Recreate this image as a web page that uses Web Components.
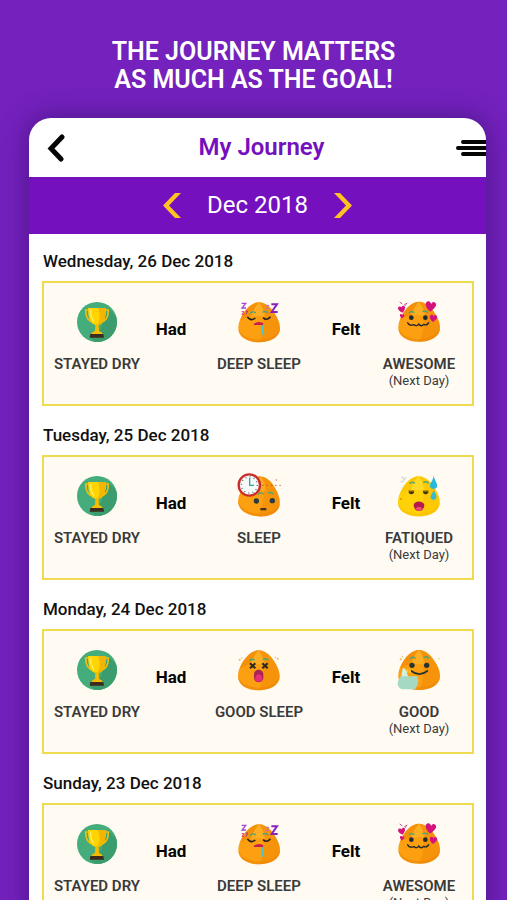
<!DOCTYPE html>
<html lang="en">
<head>
<meta charset="utf-8">
<meta name="viewport" content="width=device-width, initial-scale=1">
<title>My Journey</title>
<style>
html { height: 100%; }
body { margin: 0; height: 100%; overflow: hidden; background: #7421bd; font-family: Roboto, "Liberation Sans", sans-serif; }
</style>
</head>
<body>
<journey-page>
  <span slot="slogan">THE JOURNEY MATTERS<br>AS MUCH AS THE GOAL!</span>
  <app-header slot="header">My Journey</app-header>
  <month-bar slot="header">Dec 2018</month-bar>
  <day-entry day="Wednesday, 26 Dec 2018">
    <mood-item icon="trophy">STAYED DRY</mood-item><span slot="had">Had</span>
    <mood-item slot="sleep" icon="deep">DEEP SLEEP</mood-item><span slot="felt">Felt</span>
    <mood-item slot="mood" icon="love" note="(Next Day)">AWESOME</mood-item>
  </day-entry>
  <day-entry day="Tuesday, 25 Dec 2018">
    <mood-item icon="trophy">STAYED DRY</mood-item><span slot="had">Had</span>
    <mood-item slot="sleep" icon="clock">SLEEP</mood-item><span slot="felt">Felt</span>
    <mood-item slot="mood" icon="sweat" note="(Next Day)">FATIQUED</mood-item>
  </day-entry>
  <day-entry day="Monday, 24 Dec 2018">
    <mood-item icon="trophy">STAYED DRY</mood-item><span slot="had">Had</span>
    <mood-item slot="sleep" icon="out">GOOD SLEEP</mood-item><span slot="felt">Felt</span>
    <mood-item slot="mood" icon="thumb" note="(Next Day)">GOOD</mood-item>
  </day-entry>
  <day-entry day="Sunday, 23 Dec 2018">
    <mood-item icon="trophy">STAYED DRY</mood-item><span slot="had">Had</span>
    <mood-item slot="sleep" icon="deep">DEEP SLEEP</mood-item><span slot="felt">Felt</span>
    <mood-item slot="mood" icon="love" note="(Next Day)">AWESOME</mood-item>
  </day-entry>
</journey-page>
<script>
const shadow = (el, html) => { el.attachShadow({ mode: "open" }).innerHTML = html; };

/* Faces share one egg-shaped body; each drawing has its own view box. */
const BODY = "M62 0C84 0 102 20 114 42C122 56 125 68 125 78C125 106 94 120 62 120S0 106 0 78C0 68 2 56 10 42C22 20 40 0 62 0Z";
const egg = (x, y, fill = "#fc9f10", shade = "#ec8104", light = "#ffb52c") => `
  <g transform="translate(${x} ${y})">
    <path d="${BODY}" fill="${fill}"/>
    <path d="M62 0C84 0 102 20 114 42C122 56 125 68 125 78C125 106 94 120 62 120C80 92 80 32 62 0Z" fill="${shade}" opacity=".4"/>
    <path d="M10 42C22 20 40 0 62 0C54 8 44 24 38 42Q22 44 6 54Z" fill="${shade}" opacity=".5"/>
    <path d="M38 44C44 26 54 8 62 0C72 12 78 28 80 44Q58 38 38 44Z" fill="${light}" opacity=".7"/>
    <path d="M0 78C6 100 34 112 62 112S118 100 125 78C125 106 94 120 62 120S0 106 0 78Z" fill="${shade}" opacity=".45"/>
  </g>`;
const brows = (a, b, y) => `<path d="M${a - 7} ${y + 2}q6-6 14-1M${b - 7} ${y - 1}q8-4 14 2" fill="none" stroke="#45a878" stroke-width="4" stroke-linecap="round"/>`;
const heart = (x, y, s, r = 0) => `<path transform="translate(${x} ${y}) rotate(${r}) scale(${s})" d="M0 9C-16-2-10-12-4-10Q-1-9 0-6Q2-12 7-10C14-6 7 3 0 9Z" fill="#d3127c"/>`;

const ICONS = {
  trophy: ["37 30 144 132", `
    <defs><clipPath id="c"><circle cx="109" cy="99" r="60"/></clipPath></defs>
    <circle cx="109" cy="99" r="60" fill="#45ac7b"/>
    <path clip-path="url(#c)" d="M143 58L190 106V180H126L88 146L120 120Z" fill="#3b9d6e"/>
    <path d="M84 63H75C75 82 82 97 98 99M134 63H143C143 82 136 97 120 99" fill="none" stroke="#f3bd08" stroke-width="5"/>
    <path d="M82 57H136C136 85 130 108 109 108S82 85 82 57Z" fill="#ffd400"/>
    <path d="M112 57H136C136 85 130 108 110 108C120 94 118 75 112 57Z" fill="#f2b600"/>
    <path d="M90 62C90 78 93 90 100 98" fill="none" stroke="#ffed70" stroke-width="4"/>
    <path d="M104 106h10l1 19 10 7v5H93v-5l10-7Z" fill="#f5bc00"/>
    <path d="M89 135h39l2 11H87Z" fill="#3d2b20"/>`],
  deep: ["43 30 144 132", egg(53, 40) + brows(97, 134, 70) + `
    <path d="M80 84Q92 98 104 87M127 86Q139 97 149 83" fill="none" stroke="#26231f" stroke-width="5"/>
    <path d="M99 105Q110 94 128 102L127 108H100Z" fill="#c71f4c"/>
    <path d="M121 108h9v26q-3 7-7 1Z" fill="#49c7cc"/>
    <g fill="none" stroke-linejoin="miter"><path d="M63 43h12L64 57h12" stroke="#a347d9" stroke-width="4"/><path d="M63 68h7l-6 8h7" stroke="#d84372" stroke-width="3"/><path d="M75 66h6l-5 10" stroke="#a3358c" stroke-width="3"/><path d="M152 46h17L153 69h18" stroke="#8c20ba" stroke-width="6"/><path d="M136 49h9l-8 10h9" stroke="#c36bbd" stroke-width="3"/></g>`],
  love: ["53 30 144 132", egg(63, 38) + brows(103, 144, 69) + `
    <circle cx="102" cy="86" r="7" fill="#242a28"/><circle cx="144" cy="86" r="7" fill="#242a28"/>
    <path d="M91 101Q96 112 111 107Q119 114 124 105Q132 115 139 106Q149 111 154 101" fill="none" stroke="#242a28" stroke-width="4" stroke-linecap="round"/>
    ${heart(160, 54, 1.55, 8)}${heart(168, 89, 1.1, 8)}${heart(74, 62, 1.05, -12)}${heart(74, 82, .65, 8)}
    <path d="M67 39l8 6m6 2 9-5M82 50l5-3" stroke="#cc4c88" stroke-width="3"/>`],
  clock: ["45 22 144 132", `<g transform="rotate(5 118 90)">${egg(56, 32)}</g>` + brows(122, 152, 83) + `
    <circle cx="109" cy="106" r="8" fill="#263e42"/><circle cx="157" cy="105" r="8" fill="#263e42"/>
    <rect x="121" y="127" width="18" height="7" fill="#4b321c"/>
    <path d="M126 59H184" stroke="#b74a0f" stroke-width="2" stroke-dasharray="5 8"/><circle cx="169" cy="43" r="2" fill="#ce6637"/>
    <circle cx="88" cy="58" r="32" fill="#f5faf8" stroke="#c92c2c" stroke-width="7"/>
    <circle cx="88" cy="58" r="24" fill="none" stroke="#527277" stroke-width="4" stroke-dasharray="3 9.56"/>
    <path d="M89 37V59H102" fill="none" stroke="#31a79b" stroke-width="4"/>`],
  sweat: ["48 24 144 132", egg(57, 34, "#ffd109", "#f9bd00", "#ffe034") + brows(100, 141, 53) + `
    <path d="M89 79h16v4q-8 9-16 0ZM132 79h16v4q-8 9-16 0Z" fill="#423517"/>
    <path d="M88 77h18M131 77h18" stroke="#bd8707" stroke-width="3"/>
    <path d="M104 121C105 106 134 106 136 121Q134 138 120 138T104 121Z" fill="#b4194a"/><path d="M109 131Q120 120 131 131Q120 143 109 131Z" fill="#f04a7f"/>
    <path d="M164 31C166 47 177 55 174 65C170 74 157 74 153 65C151 56 163 47 164 31Z" fill="#27b8dc"/>
    <path d="M164 72C166 84 174 89 172 98C169 106 158 106 155 98C154 90 163 84 164 72Z" fill="#38b8d1"/>
    <path d="M67 40q8-8 7 2t8-6M65 50q7-5 7 4" fill="none" stroke="#d5dddd" stroke-width="4"/><circle cx="66" cy="102" r="3" fill="#dd9a00"/>`],
  out: ["51 18 144 132", egg(60, 28) + brows(102, 143, 56) + `
    <path d="M96 67l16 15m0-15L96 82M133 67l16 15m0-15-16 15" stroke="#292a25" stroke-width="6"/>
    <rect x="108" y="86" width="28" height="38" rx="14" fill="#ab2254"/><path d="M111 113Q113 100 122 100T133 113Q131 122 122 122T111 113Z" fill="#e62f78"/>
    <g fill="#e9b86c"><circle cx="65" cy="56" r="3"/><circle cx="71" cy="51" r="2"/><circle cx="179" cy="53" r="3"/><circle cx="173" cy="49" r="2"/></g>`],
  thumb: ["48 16 144 132", egg(58, 25) + brows(102, 142, 48) + `
    <circle cx="99" cy="71" r="8" fill="#28332f"/><circle cx="143" cy="71" r="8" fill="#28332f"/>
    <path d="M97 88Q121 107 145 88" fill="none" stroke="#28332f" stroke-width="5" stroke-linecap="round"/>
    <path d="M72 79Q84 82 84 96L87 104H110Q120 105 116 113Q121 119 116 125Q119 131 112 135Q112 143 101 143H68Q53 137 57 119Q60 108 69 99Z" fill="#a5d9c4"/>
    <path d="M72 79Q84 82 84 96L87 104H68V96Z" fill="#d6f0df"/>
    <path d="M86 82v12m7-9v10" stroke="#ffc21c" stroke-width="5"/>
    <g fill="#e8b45b"><circle cx="65" cy="53" r="3"/><circle cx="70" cy="45" r="2"/><circle cx="180" cy="51" r="2"/></g>`]
};

customElements.define("journey-page", class extends HTMLElement {
  constructor() { super(); shadow(this, `
    <style>
      :host { display: flex; flex-direction: column; min-height: 100%; box-sizing: border-box; padding-top: 38px; }
      h1 { margin: 0 0 24px; color: #fff; font-weight: 600; font-size: 25px; line-height: 28px; text-align: center; }
      main { flex: 1; margin: 0 21px 0 29px; background: #fff; border-radius: 22px 22px 0 0; box-shadow: 0 0 24px 2px rgba(50, 15, 100, .55); }
      .top { overflow: hidden; border-radius: 22px 22px 0 0; }
      .list { display: flex; flex-direction: column; gap: 19px; padding: 17px 12px 0 13px; }
    </style>
    <h1><slot name="slogan"></slot></h1>
    <main><div class="top"><slot name="header"></slot></div><div class="list"><slot></slot></div></main>`); }
});

customElements.define("app-header", class extends HTMLElement {
  constructor() { super(); shadow(this, `
    <style>
      :host { display: grid; grid-template-columns: 56px 1fr 48px; align-items: center; height: 59px; color: #7410bd; }
      h2 { margin: 0; padding-bottom: 2px; font-weight: 600; font-size: 24px; line-height: 30px; text-align: center; }
      button { border: 0; padding: 0; background: none; height: 44px; display: flex; align-items: center; color: #050505; }
      .back { padding-left: 18px; } .menu { justify-content: flex-end; }
      svg { display: block; fill: none; stroke: currentColor; }
    </style>
    <button class="back" aria-label="Back"><svg width="19" height="28" viewBox="0 0 19 28"><path d="M15 3L4 14.500L14 25" stroke-width="5" stroke-linecap="round"/></svg></button>
    <h2><slot></slot></h2>
    <button class="menu" aria-label="Menu"><svg width="31" height="18" viewBox="0 0 31 18"><path d="M8 3H34M3 9H34M8 15H34" stroke-width="4" stroke-linecap="round"/></svg></button>`); }
});

customElements.define("month-bar", class extends HTMLElement {
  constructor() { super(); shadow(this, `
    <style>
      :host { display: flex; justify-content: center; align-items: center; gap: 26px; height: 57px; background: #7410bd; color: #fff; font-size: 24px; line-height: 30px; }
      button { border: 0; padding: 0; background: none; color: #ffc222; }
      svg { display: block; fill: currentColor; }
      span { padding-bottom: 2px; }
    </style>
    <button aria-label="Previous month"><svg width="18" height="25" viewBox="0 0 18 25"><path d="M12 0H18L6 12.500L18 25H12L0 12.500Z"/></svg></button>
    <span><slot></slot></span>
    <button aria-label="Next month"><svg width="18" height="25" viewBox="0 0 18 25"><path d="M6 0H0L12 12.500L0 25H6L18 12.500Z"/></svg></button>`); }
});

customElements.define("day-entry", class extends HTMLElement {
  constructor() { super(); shadow(this, `
    <style>
      :host { display: block; }
      h3 { margin: 0 0 10px; padding-left: 1px; color: #111; font-weight: 500; font-size: 17px; line-height: 20px; }
      .card { display: grid; grid-template-columns: 106fr 42fr 134fr 40fr 106fr; align-items: start; padding: 16px 0; border: 2px solid #f0da50; background: #fffbf3; }
      .word { padding-top: 20px; color: #050505; font-weight: 700; font-size: 17px; line-height: 20px; text-align: center; }
    </style>
    <h3></h3>
    <div class="card">
      <slot></slot><div class="word"><slot name="had"></slot></div>
      <slot name="sleep"></slot><div class="word"><slot name="felt"></slot></div>
      <slot name="mood"></slot>
    </div>`); }
  connectedCallback() { this.shadowRoot.querySelector("h3").textContent = this.getAttribute("day"); }
});

customElements.define("mood-item", class extends HTMLElement {
  constructor() { super(); shadow(this, `
    <style>
      :host { display: flex; flex-direction: column; align-items: center; min-width: 0; color: #3a3a3a; white-space: nowrap; }
      svg { display: block; margin-bottom: 12px; }
      .label { font-weight: 600; font-size: 15px; line-height: 18px; }
      .note { min-height: 15px; font-size: 13px; line-height: 15px; }
    </style>
    <svg width="48" height="44" aria-hidden="true"></svg>
    <div class="label"><slot></slot></div><div class="note"></div>`); }
  connectedCallback() {
    const [box, art] = ICONS[this.getAttribute("icon")];
    const svg = this.shadowRoot.querySelector("svg");
    svg.setAttribute("viewBox", box);
    svg.innerHTML = art;
    this.shadowRoot.querySelector(".note").textContent = this.getAttribute("note") || "";
  }
});
</script>
</body>
</html>
